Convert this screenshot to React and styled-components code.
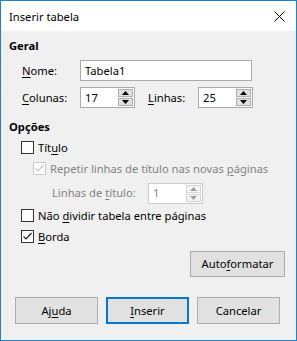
import { styled, createGlobalStyle } from "styled-components";

const Global = createGlobalStyle`
  html, body {
    margin: 0;
    padding: 0;
    background: #ffffff;
  }
  body {
    font-family: "Noto Sans", "Open Sans", sans-serif;
    font-size: 11.2px;
    color: #000;
  }
`;

const Window = styled.div`
  box-sizing: border-box;
  width: 297px;
  height: 341px;
  border: 1px solid #1883d7;
  display: flex;
  flex-direction: column;
  background: #f0f0f0;
`;

const TitleBar = styled.div`
  height: 30px;
  flex: none;
  background: #ffffff;
  display: flex;
  align-items: center;
  justify-content: space-between;
  padding: 0 11px 0 8px;
`;

const Title = styled.span`
  color: #000;
`;

const Body = styled.div`
  flex: 1;
  display: flex;
  flex-direction: column;
  padding: 7px 10px 0 8px;
`;

const Heading = styled.div`
  font-weight: bold;
  line-height: 16px;
  margin-top: ${(p) => p.$top || 0}px;
`;

const Row = styled.div`
  display: flex;
  align-items: center;
  height: ${(p) => p.$h || 21}px;
  margin-top: ${(p) => p.$top || 0}px;
  padding-left: ${(p) => p.$indent || 13}px;
`;

const Label = styled.label`
  width: ${(p) => p.$w}px;
  flex: none;
  line-height: 16px;
  color: ${(p) => (p.$disabled ? "#838383" : "#000")};
`;

const Mn = styled.span`
  text-decoration: underline;
  text-underline-offset: 2px;
`;

const TextBox = styled.div`
  box-sizing: border-box;
  width: ${(p) => p.$w}px;
  height: 21px;
  border: 1px solid ${(p) => (p.$disabled ? "#cccccc" : "#a9a9a9")};
  background: #fff;
  display: flex;
  align-items: center;
  padding-left: 4px;
  color: ${(p) => (p.$disabled ? "#838383" : "#000")};
  line-height: 16px;
`;

const SpinValue = styled.span`
  flex: 1;
`;

const SpinButtons = styled.div`
  display: flex;
  flex-direction: column;
  gap: 1px;
  margin-right: 1px;
`;

const SpinButton = styled.div`
  box-sizing: border-box;
  width: 15px;
  height: 8px;
  border: 1px solid ${(p) => (p.$disabled ? "#d5d5d5" : "#adadad")};
  background: ${(p) => (p.$disabled ? "#f4f4f4" : "#e1e1e1")};
  display: flex;
  align-items: center;
  justify-content: center;
  color: ${(p) => (p.$disabled ? "#a0a0a0" : "#000")};
`;

const Check = styled.span`
  box-sizing: border-box;
  width: 13px;
  height: 13px;
  flex: none;
  border: 1px solid ${(p) => (p.$disabled ? "#cccccc" : "#333333")};
  background: #fff;
  margin-right: 4px;
  display: flex;
  align-items: center;
  justify-content: center;
`;

const ButtonRow = styled.div`
  display: flex;
  justify-content: ${(p) => p.$justify || "flex-start"};
  gap: 8px;
  margin-top: ${(p) => p.$top || 0}px;
  padding-left: ${(p) => p.$left || 0}px;
  padding-right: ${(p) => p.$right || 0}px;
`;

const Button = styled.div`
  box-sizing: border-box;
  width: ${(p) => p.$w}px;
  height: ${(p) => p.$h}px;
  background: #e1e1e1;
  border: ${(p) => (p.$default ? "2px solid #0078d7" : "1px solid #adadad")};
  display: flex;
  align-items: center;
  justify-content: center;
  line-height: 16px;
`;

function Arrow({ up }) {
  return (
    <svg width="7" height="4" viewBox="0 0 7 4">
      <polygon points={up ? "0,4 7,4 3.5,0" : "0,0 7,0 3.5,4"} fill="currentColor" />
    </svg>
  );
}

function Spin({ value, w = 55, disabled }) {
  return (
    <TextBox $w={w} $disabled={disabled}>
      <SpinValue>{value}</SpinValue>
      <SpinButtons>
        <SpinButton $disabled={disabled}>
          <Arrow up />
        </SpinButton>
        <SpinButton $disabled={disabled}>
          <Arrow />
        </SpinButton>
      </SpinButtons>
    </TextBox>
  );
}

function CheckBox({ checked, disabled }) {
  return (
    <Check $disabled={disabled}>
      {checked && (
        <svg width="11" height="11" viewBox="0 0 11 11">
          <polyline
            points="1.5,5.5 4,8 9.5,2"
            fill="none"
            stroke={disabled ? "#c4c4c4" : "#222"}
            strokeWidth="1.2"
          />
        </svg>
      )}
    </Check>
  );
}

export default function App() {
  return (
    <>
      <Global />
      <Window>
        <TitleBar>
          <Title>Inserir tabela</Title>
          <svg width="11" height="11" viewBox="0 0 11 11">
            <path d="M0.5 0.5 L10.5 10.5 M10.5 0.5 L0.5 10.5" stroke="#000" strokeWidth="1" />
          </svg>
        </TitleBar>
        <Body>
          <Heading>Geral</Heading>
          <Row $top={6}>
            <Label $w={58}>
              <Mn>N</Mn>ome:
            </Label>
            <TextBox $w={172}>Tabela1</TextBox>
          </Row>
          <Row $top={6}>
            <Label $w={58}>
              <Mn>C</Mn>olunas:
            </Label>
            <Spin value="17" />
            <Label $w={50} style={{ marginLeft: 13 }}>
              <Mn>L</Mn>inhas:
            </Label>
            <Spin value="25" />
          </Row>

          <Heading $top={11}>Opções</Heading>
          <Row $top={2} $indent={12}>
            <CheckBox />
            <Label>
              Tít<Mn>u</Mn>lo
            </Label>
          </Row>
          <Row $indent={24}>
            <CheckBox checked disabled />
            <Label $disabled>
              Repetir linhas de título nas novas <Mn>p</Mn>áginas
            </Label>
          </Row>
          <Row $top={2} $h={24} $indent={43}>
            <Label $w={96} $disabled>
              Linhas de <Mn>t</Mn>ítulo:
            </Label>
            <Spin value="1" disabled />
          </Row>
          <Row $indent={12}>
            <CheckBox />
            <Label>
              Não <Mn>d</Mn>ividir tabela entre páginas
            </Label>
          </Row>
          <Row $indent={12}>
            <CheckBox checked />
            <Label>
              <Mn>B</Mn>orda
            </Label>
          </Row>

          <ButtonRow $justify="flex-end" $top={4} $right={1}>
            <Button $w={95} $h={26}>
              <span>
                Auto<Mn>f</Mn>ormatar
              </span>
            </Button>
          </ButtonRow>
          <ButtonRow $top={20} $left={6}>
            <Button $w={83} $h={27}>
              <span>
                Aj<Mn>u</Mn>da
              </span>
            </Button>
            <Button $w={83} $h={27} $default>
              <span>
                <Mn>I</Mn>nserir
              </span>
            </Button>
            <Button $w={83} $h={27}>
              Cancelar
            </Button>
          </ButtonRow>
        </Body>
      </Window>
    </>
  );
}
